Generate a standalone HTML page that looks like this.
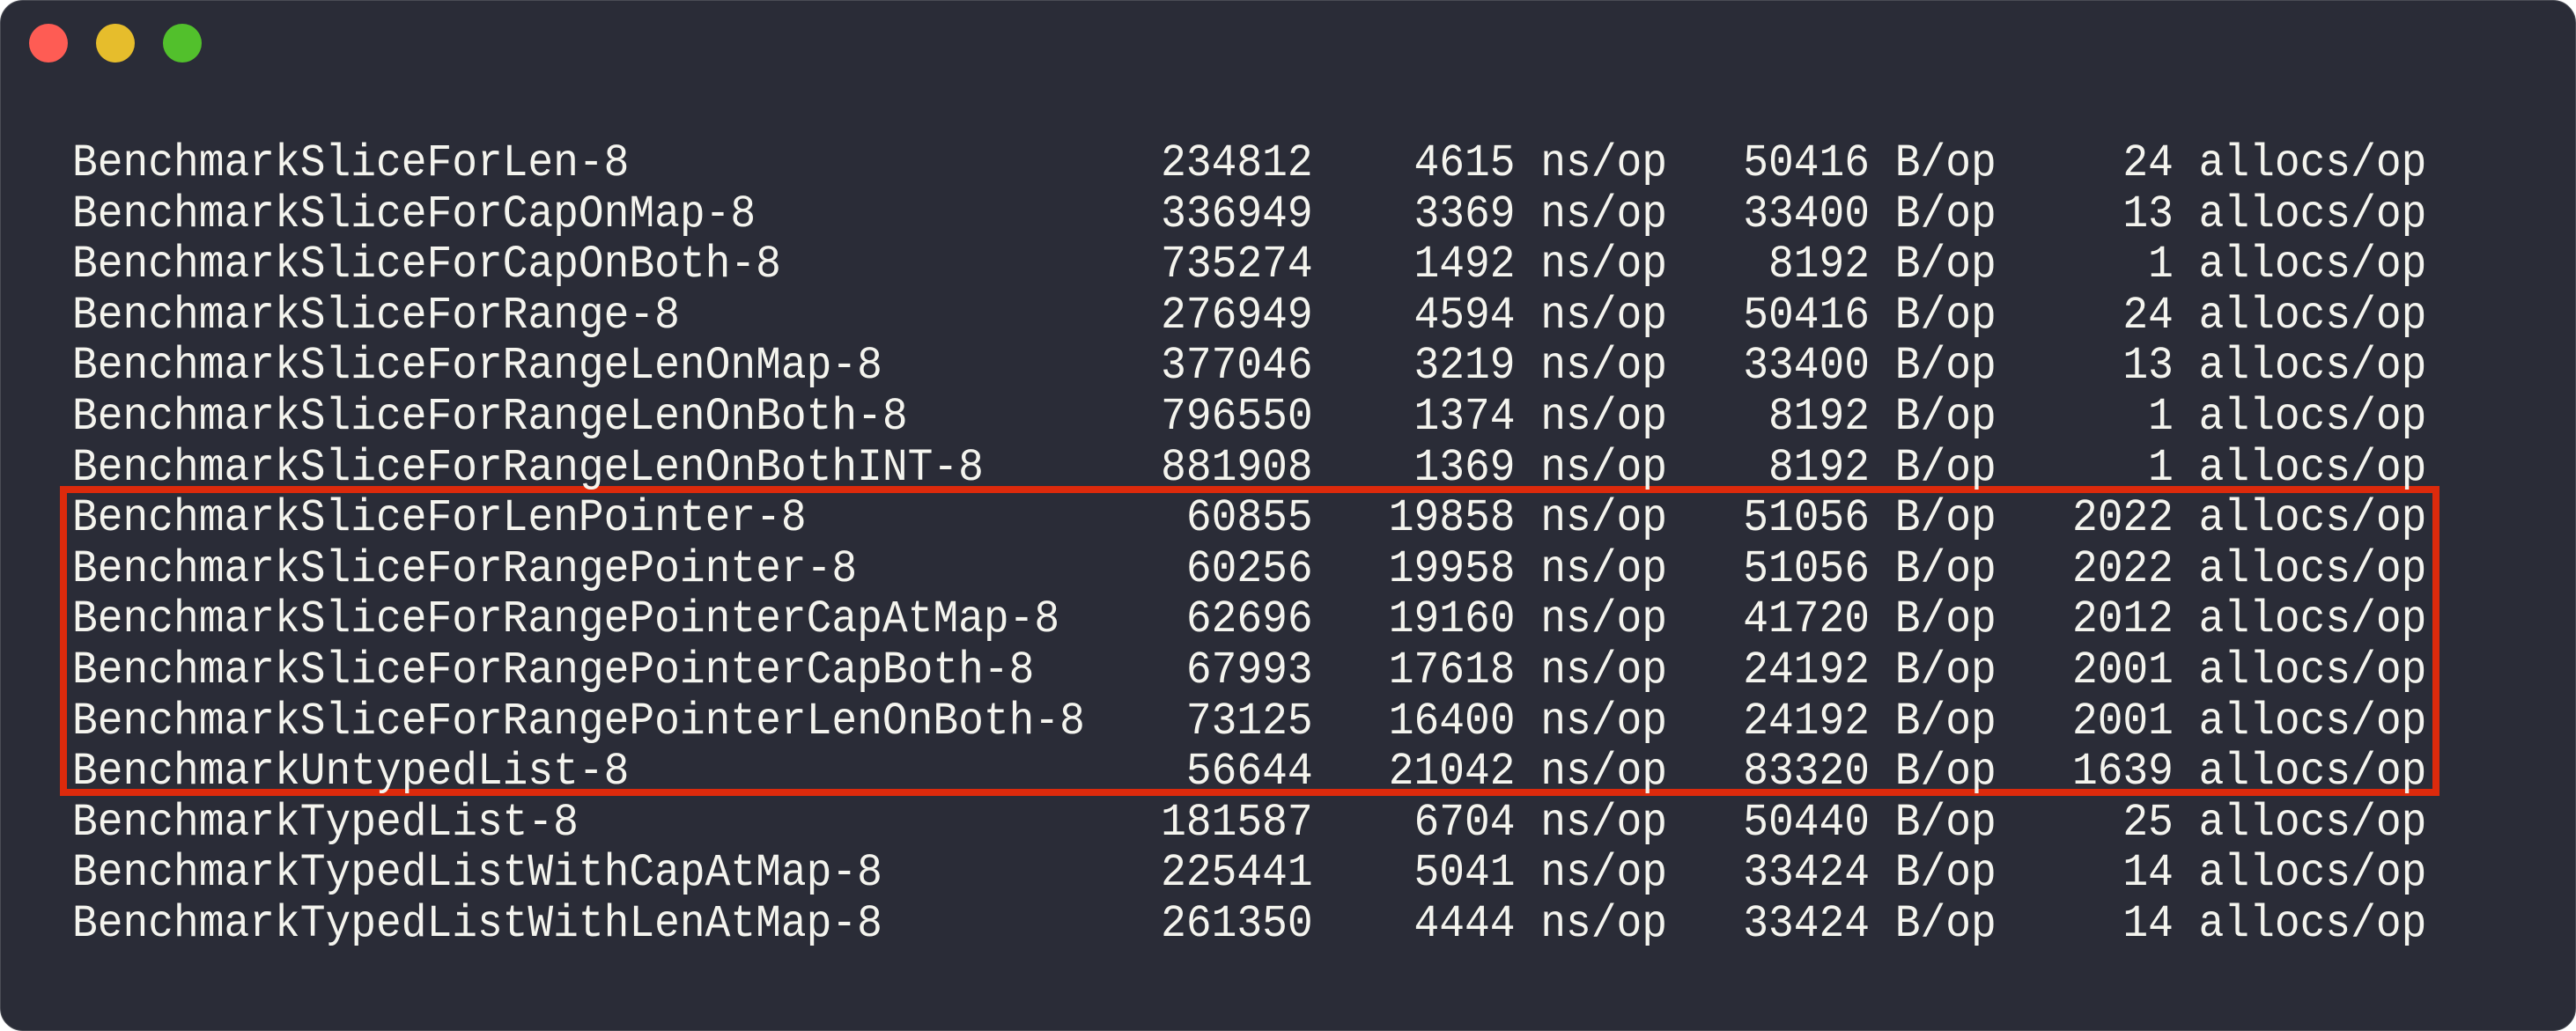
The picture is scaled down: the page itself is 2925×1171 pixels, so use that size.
<!DOCTYPE html>
<html><head><meta charset="utf-8"><style>
html,body{margin:0;padding:0;width:2925px;height:1171px;background:#ffffff;overflow:hidden}
.win{position:absolute;left:0;top:0;width:2923px;height:1169px;background:#2a2c37;border:1px solid #4a4c55;border-radius:26px;overflow:hidden}
.dot{position:absolute;top:26px;width:44px;height:44px;border-radius:50%}
pre{position:absolute;left:81px;top:156px;margin:0;font-family:"Liberation Mono",monospace;font-size:52px;line-height:57.6px;color:#f4f4ee;transform:scaleX(0.9212);transform-origin:0 0;white-space:pre}
.box{position:absolute;left:67px;top:551px;width:2686px;height:336px;border:8px solid #dc2a0c}
</style></head><body><div class="win">
<div class="dot" style="left:32px;background:#fe5c54"></div>
<div class="dot" style="left:108px;background:#e6bd2c"></div>
<div class="dot" style="left:184px;background:#52c02c"></div>
<div class="box"></div>
<pre>BenchmarkSliceForLen-8                     234812    4615 ns/op   50416 B/op     24 allocs/op
BenchmarkSliceForCapOnMap-8                336949    3369 ns/op   33400 B/op     13 allocs/op
BenchmarkSliceForCapOnBoth-8               735274    1492 ns/op    8192 B/op      1 allocs/op
BenchmarkSliceForRange-8                   276949    4594 ns/op   50416 B/op     24 allocs/op
BenchmarkSliceForRangeLenOnMap-8           377046    3219 ns/op   33400 B/op     13 allocs/op
BenchmarkSliceForRangeLenOnBoth-8          796550    1374 ns/op    8192 B/op      1 allocs/op
BenchmarkSliceForRangeLenOnBothINT-8       881908    1369 ns/op    8192 B/op      1 allocs/op
BenchmarkSliceForLenPointer-8               60855   19858 ns/op   51056 B/op   2022 allocs/op
BenchmarkSliceForRangePointer-8             60256   19958 ns/op   51056 B/op   2022 allocs/op
BenchmarkSliceForRangePointerCapAtMap-8     62696   19160 ns/op   41720 B/op   2012 allocs/op
BenchmarkSliceForRangePointerCapBoth-8      67993   17618 ns/op   24192 B/op   2001 allocs/op
BenchmarkSliceForRangePointerLenOnBoth-8    73125   16400 ns/op   24192 B/op   2001 allocs/op
BenchmarkUntypedList-8                      56644   21042 ns/op   83320 B/op   1639 allocs/op
BenchmarkTypedList-8                       181587    6704 ns/op   50440 B/op     25 allocs/op
BenchmarkTypedListWithCapAtMap-8           225441    5041 ns/op   33424 B/op     14 allocs/op
BenchmarkTypedListWithLenAtMap-8           261350    4444 ns/op   33424 B/op     14 allocs/op</pre>
</div></body></html>
